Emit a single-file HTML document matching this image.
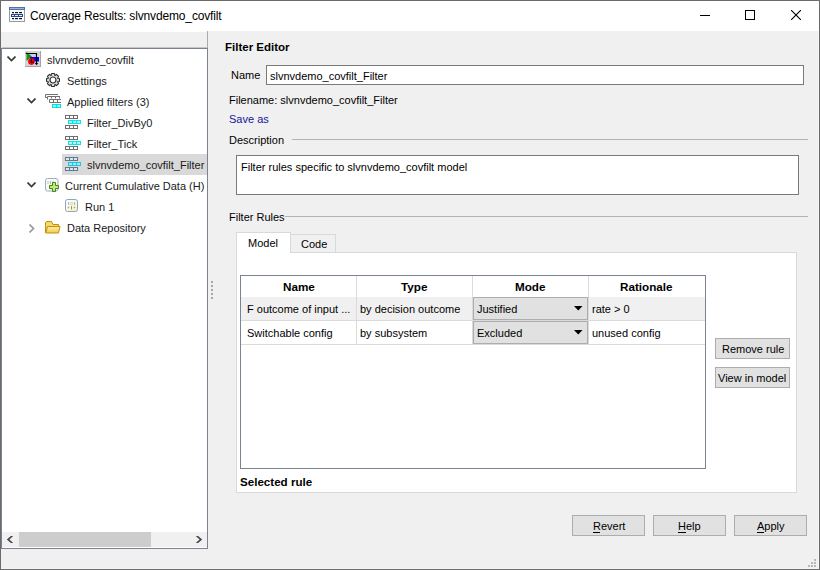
<!DOCTYPE html>
<html><head><meta charset="utf-8">
<style>
html,body{margin:0;padding:0;}
body{width:820px;height:570px;position:relative;overflow:hidden;background:#f0f0f0;font-family:"Liberation Sans",sans-serif;font-size:11px;color:#000;}
.a{position:absolute;}
.t{position:absolute;white-space:nowrap;line-height:13px;font-size:11px;}
.b{font-weight:bold;}
</style></head><body>
<!-- window frame -->
<div class="a" style="left:0;top:0;width:820px;height:31px;background:#fff;"></div>
<div class="a" style="left:0;top:31px;width:207px;height:1px;background:#fff;"></div>
<div class="a" style="left:0;top:0;width:820px;height:1px;background:#6b6b6b;"></div>
<div class="a" style="left:0;top:0;width:1px;height:570px;background:#6b6b6b;"></div>
<div class="a" style="left:818px;top:31px;width:1px;height:538px;background:#f5f5f5;"></div>
<div class="a" style="left:1px;top:568px;width:818px;height:1px;background:#f5f5f5;"></div>
<div class="a" style="left:819px;top:0;width:1px;height:570px;background:#6b6b6b;"></div>
<div class="a" style="left:0;top:569px;width:820px;height:1px;background:#6b6b6b;"></div>

<!-- title icon -->
<svg class="a" style="left:9px;top:7px" width="16" height="15" viewBox="0 0 16 15">
<rect x="0.5" y="0.5" width="15" height="14" fill="#fbfbfb" stroke="#9a9a9a"/>
<rect x="0" y="0" width="16" height="3" fill="#55739e"/>
<rect x="1" y="1" width="14" height="1" fill="#9ab6da"/>
<rect x="3" y="5" width="2" height="1.2" fill="#111"/><rect x="6" y="5" width="3" height="1.2" fill="#111"/><rect x="10" y="5" width="3" height="1.2" fill="#111"/>
<rect x="2" y="7" width="12" height="3" fill="#23468e"/>
<rect x="3" y="8" width="2" height="1" fill="#e8eef8"/><rect x="6" y="8" width="3" height="1" fill="#e8eef8"/><rect x="10" y="8" width="3" height="1" fill="#e8eef8"/>
<rect x="3" y="11" width="2" height="1.2" fill="#111"/><rect x="6" y="11" width="3" height="1.2" fill="#111"/><rect x="10" y="11" width="3" height="1.2" fill="#111"/>
</svg>
<div class="t" style="left:30px;top:9px;font-size:12px;letter-spacing:-0.15px;line-height:14px;">Coverage Results: slvnvdemo_covfilt</div>

<!-- window controls -->
<div class="a" style="left:700px;top:15px;width:10px;height:1px;background:#000;"></div>
<div class="a" style="left:745px;top:10px;width:8px;height:8px;border:1px solid #000;"></div>
<svg class="a" style="left:791px;top:10px" width="10" height="10" viewBox="0 0 10 10"><path d="M0 0L10 10M10 0L0 10" stroke="#000" stroke-width="1.1"/></svg>

<!-- left panel -->
<div class="a" style="left:2px;top:32px;width:205px;height:16px;background:#f0f0f0;"></div>
<div class="a" style="left:1px;top:48px;width:207px;height:501px;background:#fff;border:1px solid #7b8390;box-sizing:border-box;"></div>
<div class="a" style="left:2px;top:47px;width:205px;height:1px;background:#c4c6ca;"></div>
<div class="a" style="left:207px;top:31px;width:1px;height:17px;background:#a9abae;"></div>

<!-- scrollbar -->
<div class="a" style="left:2px;top:532px;width:205px;height:15px;background:#f0f0f0;"></div>
<div class="a" style="left:19px;top:532px;width:132px;height:15px;background:#cdcdcd;"></div>

<!-- splitter dots -->
<div class="a" style="left:211px;top:281px;width:2px;height:2px;background:#a8a8a8;"></div>
<div class="a" style="left:211px;top:285px;width:2px;height:2px;background:#a8a8a8;"></div>
<div class="a" style="left:211px;top:289px;width:2px;height:2px;background:#a8a8a8;"></div>
<div class="a" style="left:211px;top:293px;width:2px;height:2px;background:#a8a8a8;"></div>
<div class="a" style="left:211px;top:297px;width:2px;height:2px;background:#a8a8a8;"></div>

<!-- TREE -->

<!-- row1 -->
<svg class="a" style="left:7px;top:56px" width="9" height="6" viewBox="0 0 9 6"><path d="M0.5 0.5L4.5 4.5L8.5 0.5" fill="none" stroke="#3a3a3a" stroke-width="1.7"/></svg>
<svg class="a" style="left:25px;top:51px" width="16" height="16" viewBox="0 0 16 16">
<rect x="0" y="0" width="16" height="16" fill="#a4a4a4"/><rect x="0" y="0" width="15" height="15" fill="#d4d4d4"/>
<path d="M1.5 1V10L7 5.5Z" fill="#169016"/>
<rect x="5" y="6" width="9" height="4.5" fill="#0000ff"/>
<circle cx="6.4" cy="10.6" r="3.3" fill="#ff0000"/>
<path d="M6.3 8.3V11.2H8.8" fill="none" stroke="#000" stroke-width="1.1"/>
<path d="M0.8 2.5H11.5V12.5" fill="none" stroke="#000" stroke-width="1.2"/>
<path d="M9.8 12H13.2L11.5 14.3Z" fill="#000"/>
</svg>
<div class="t" style="left:47px;top:54px;color:#1a1a1a">slvnvdemo_covfilt</div>
<!-- row2 settings -->
<svg class="a" style="left:46px;top:73px" width="14" height="14" viewBox="0 0 14 14">
<g transform="translate(7 7)">
<path d="M-1.76 -4.68L-1.44 -6.44L1.44 -6.44L1.76 -4.68L2.06 -4.55L3.54 -5.57L5.57 -3.54L4.55 -2.06L4.68 -1.76L6.44 -1.44L6.44 1.44L4.68 1.76L4.55 2.06L5.57 3.54L3.54 5.57L2.06 4.55L1.76 4.68L1.44 6.44L-1.44 6.44L-1.76 4.68L-2.06 4.55L-3.54 5.57L-5.57 3.54L-4.55 2.06L-4.68 1.76L-6.44 1.44L-6.44 -1.44L-4.68 -1.76L-4.55 -2.06L-5.57 -3.54L-3.54 -5.57L-2.06 -4.55Z" fill="#dcdcdc" stroke="#2e2e2e" stroke-width="1.1" stroke-linejoin="round"/>
<circle cx="0" cy="0" r="3.0" fill="#fff" stroke="#2e2e2e" stroke-width="1.2"/>
</g></svg>
<div class="t" style="left:67px;top:75px;color:#1a1a1a">Settings</div>
<!-- row3 applied filters -->
<svg class="a" style="left:27px;top:98px" width="9" height="6" viewBox="0 0 9 6"><path d="M0.5 0.5L4.5 4.5L8.5 0.5" fill="none" stroke="#3a3a3a" stroke-width="1.7"/></svg>
<svg class="a" style="left:45px;top:94px" width="16" height="15" viewBox="0 0 16 15">
<g fill="none" stroke="#707070" stroke-width="1">
<path d="M0.5 3.5V0.5H13"/><path d="M0.5 3.5H2.5"/>
<path d="M2.5 5.5V2.5H15"/><path d="M6.5 3V4.5M10.5 3V4.5M14.5 3V4.5"/>
<path d="M4.5 8.5V5.5H16"/><path d="M4.5 8.5H16"/><path d="M8.5 6V8M12.5 6V8"/>
</g>
<rect x="7" y="10" width="9" height="4" fill="#00e3e6"/>
<rect x="8" y="11" width="3" height="2" fill="#9ff3f3"/><rect x="12" y="11" width="3" height="2" fill="#9ff3f3"/>
</svg>
<div class="t" style="left:67px;top:96px;color:#1a1a1a">Applied filters (3)</div>
<div class="a" style="left:62px;top:154px;width:145px;height:21px;background:#d9d9d9;"></div>
<svg class="a" style="left:65px;top:115px" width="16" height="14" viewBox="0 0 16 14"><rect x="0" y="0" width="13" height="4" fill="#6e6e6e"/><rect x="1" y="1" width="3" height="2" fill="#ffffff"/><rect x="5" y="1" width="3" height="2" fill="#ffffff"/><rect x="9" y="1" width="3" height="2" fill="#ffffff"/><rect x="0" y="10" width="13" height="4" fill="#6e6e6e"/><rect x="1" y="11" width="3" height="2" fill="#ffffff"/><rect x="5" y="11" width="3" height="2" fill="#ffffff"/><rect x="9" y="11" width="3" height="2" fill="#ffffff"/><rect x="3" y="5" width="13" height="4" fill="#00e8ea"/><rect x="4" y="6" width="3" height="2" fill="#b0f6f6"/><rect x="8" y="6" width="3" height="2" fill="#b0f6f6"/><rect x="12" y="6" width="3" height="2" fill="#b0f6f6"/></svg>
<div class="t" style="left:87px;top:117px;color:#1a1a1a">Filter_DivBy0</div>
<svg class="a" style="left:65px;top:136px" width="16" height="14" viewBox="0 0 16 14"><rect x="0" y="0" width="13" height="4" fill="#6e6e6e"/><rect x="1" y="1" width="3" height="2" fill="#ffffff"/><rect x="5" y="1" width="3" height="2" fill="#ffffff"/><rect x="9" y="1" width="3" height="2" fill="#ffffff"/><rect x="0" y="10" width="13" height="4" fill="#6e6e6e"/><rect x="1" y="11" width="3" height="2" fill="#ffffff"/><rect x="5" y="11" width="3" height="2" fill="#ffffff"/><rect x="9" y="11" width="3" height="2" fill="#ffffff"/><rect x="3" y="5" width="13" height="4" fill="#00e8ea"/><rect x="4" y="6" width="3" height="2" fill="#b0f6f6"/><rect x="8" y="6" width="3" height="2" fill="#b0f6f6"/><rect x="12" y="6" width="3" height="2" fill="#b0f6f6"/></svg>
<div class="t" style="left:87px;top:138px;color:#1a1a1a">Filter_Tick</div>
<svg class="a" style="left:65px;top:157px" width="16" height="14" viewBox="0 0 16 14"><rect x="0" y="0" width="13" height="4" fill="#5c7a96"/><rect x="1" y="1" width="3" height="2" fill="#dce6ee"/><rect x="5" y="1" width="3" height="2" fill="#dce6ee"/><rect x="9" y="1" width="3" height="2" fill="#dce6ee"/><rect x="0" y="10" width="13" height="4" fill="#5c7a96"/><rect x="1" y="11" width="3" height="2" fill="#dce6ee"/><rect x="5" y="11" width="3" height="2" fill="#dce6ee"/><rect x="9" y="11" width="3" height="2" fill="#dce6ee"/><rect x="3" y="5" width="13" height="4" fill="#1fc6e0"/><rect x="4" y="6" width="3" height="2" fill="#a6e6f0"/><rect x="8" y="6" width="3" height="2" fill="#a6e6f0"/><rect x="12" y="6" width="3" height="2" fill="#a6e6f0"/></svg>
<div class="t" style="left:87px;top:159px;color:#1a1a1a">slvnvdemo_covfilt_Filter</div>

<!-- row7 current -->
<svg class="a" style="left:27px;top:182px" width="9" height="6" viewBox="0 0 9 6"><path d="M0.5 0.5L4.5 4.5L8.5 0.5" fill="none" stroke="#3a3a3a" stroke-width="1.7"/></svg>
<svg class="a" style="left:45px;top:178px" width="15" height="14" viewBox="0 0 15 14">
<rect x="0.5" y="0.5" width="12.5" height="12.5" rx="2" fill="#fdfbe4" stroke="#8fb0d8"/>
<path d="M3 3V6M5.5 3V6M8 3V5" stroke="#a8c0dc" stroke-width="1"/>
<path d="M7.5 4.5H10.5V7.5H13.5V10.5H10.5V13.5H7.5V10.5H4.5V7.5H7.5Z" fill="#b6f07a" stroke="#507c22" stroke-width="1"/>
</svg>
<div class="t" style="left:65px;top:180px;color:#1a1a1a">Current Cumulative Data (H)</div>
<!-- row8 run -->
<svg class="a" style="left:65px;top:199px" width="13" height="13" viewBox="0 0 13 13">
<defs><linearGradient id="rg" x1="0" y1="0" x2="1" y2="1"><stop offset="0" stop-color="#ffffff"/><stop offset="1" stop-color="#f8f0b0"/></linearGradient></defs>
<rect x="0.5" y="0.5" width="12" height="12" rx="2" fill="url(#rg)" stroke="#86a6cf"/>
<path d="M3.5 3V6M9.5 3V6" stroke="#9cc0dc" stroke-width="1"/>
<path d="M5 4.5L6.5 3L8 4.5L6.5 6Z" fill="none" stroke="#a8c4e0" stroke-width="0.8"/>
<path d="M6.5 7V10.5" stroke="#909090" stroke-width="1"/>
<path d="M2.5 8.5L3.5 7.5L4.5 8.5L3.5 9.5Z M8.5 8.5L9.5 7.5L10.5 8.5L9.5 9.5Z" fill="#a0a0a0"/>
</svg>
<div class="t" style="left:85px;top:201px;color:#1a1a1a">Run 1</div>
<!-- row9 data repo -->
<svg class="a" style="left:29px;top:224px" width="6" height="9" viewBox="0 0 6 9"><path d="M0.5 0.5L4.5 4.5L0.5 8.5" fill="none" stroke="#9a9a9a" stroke-width="1.7"/></svg>
<svg class="a" style="left:45px;top:221px" width="16" height="13" viewBox="0 0 16 13">
<defs><linearGradient id="fg" x1="0" y1="0" x2="0" y2="1"><stop offset="0" stop-color="#fff2a8"/><stop offset="1" stop-color="#f2c84a"/></linearGradient></defs>
<path d="M0.5 1.5V11.5H13.5V3.5H8L6.5 0.5H2Z" fill="#f6d870" stroke="#c0900c" stroke-width="1"/>
<path d="M2.5 5.5H15L13.5 12H0.8Z" fill="url(#fg)" stroke="#c0900c" stroke-width="1"/>
</svg>
<div class="t" style="left:67px;top:222px;color:#1a1a1a">Data Repository</div>
<!-- scrollbar arrows -->
<svg class="a" style="left:6px;top:535px" width="8" height="9" viewBox="0 0 8 9"><path d="M7.2 1H4.9L0.8 4.5L4.9 8H7.2L3.4 4.5Z" fill="#454545"/></svg>
<svg class="a" style="left:195px;top:535px" width="8" height="9" viewBox="0 0 8 9"><path d="M0.8 1H3.1L7.2 4.5L3.1 8H0.8L4.6 4.5Z" fill="#454545"/></svg>


<!-- RIGHT PANEL -->

<div class="t b" style="left:225px;top:41px;font-size:11.5px">Filter Editor</div>
<div class="t" style="left:231px;top:69px">Name</div>
<div class="a" style="left:266px;top:65px;width:538px;height:20px;box-sizing:border-box;background:#fff;border:1px solid #7a7a7a;"></div>
<div class="t" style="left:270px;top:70px">slvnvdemo_covfilt_Filter</div>
<div class="t" style="left:229px;top:94px">Filename: slvnvdemo_covfilt_Filter</div>
<div class="t" style="left:229px;top:113px;color:#16169a">Save as</div>
<div class="t" style="left:229px;top:134px">Description</div>
<div class="a" style="left:292px;top:139px;width:516px;height:1px;background:#b4b4b4;"></div>
<div class="a" style="left:236px;top:155px;width:563px;height:40px;box-sizing:border-box;background:#fff;border:1px solid #7a7a7a;"></div>
<div class="t" style="left:241px;top:161px">Filter rules specific to slvnvdemo_covfilt model</div>
<div class="t" style="left:229px;top:211px">Filter Rules</div>
<div class="a" style="left:285px;top:216px;width:523px;height:1px;background:#b4b4b4;"></div>
<!-- tab panel -->
<div class="a" style="left:236px;top:252px;width:561px;height:241px;box-sizing:border-box;background:#fff;border:1px solid #d9d9d9;"></div>
<div class="a" style="left:290px;top:234px;width:46px;height:18px;box-sizing:border-box;background:#f0f0f0;border:1px solid #d9d9d9;border-bottom:none;"></div>
<div class="a" style="left:236px;top:232px;width:55px;height:21px;box-sizing:border-box;background:#fff;border:1px solid #d9d9d9;border-bottom:none;"></div>
<div class="t" style="left:248px;top:237px">Model</div>
<div class="t" style="left:301px;top:238px">Code</div>
<!-- table -->
<div class="a" style="left:240px;top:275px;width:466px;height:194px;box-sizing:border-box;background:#fff;border:1px solid #7b8390;"></div>
<div class="a" style="left:241px;top:297px;width:464px;height:23px;background:#f0f0f0;"></div>
<div class="a" style="left:241px;top:320px;width:464px;height:1px;background:#dadada;"></div>
<div class="a" style="left:241px;top:344px;width:464px;height:1px;background:#dadada;"></div>
<div class="a" style="left:356px;top:276px;width:1px;height:68px;background:#dadada;"></div>
<div class="a" style="left:472px;top:276px;width:1px;height:68px;background:#dadada;"></div>
<div class="a" style="left:588px;top:276px;width:1px;height:68px;background:#dadada;"></div>
<div class="t b" style="left:283px;top:280px;font-size:11.7px">Name</div>
<div class="t b" style="left:401px;top:280px;font-size:11.7px">Type</div>
<div class="t b" style="left:515px;top:280px;font-size:11.7px">Mode</div>
<div class="t b" style="left:620px;top:280px;font-size:11.7px">Rationale</div>
<div class="t" style="left:247px;top:303px">F outcome of input ...</div>
<div class="t" style="left:360px;top:303px">by decision outcome</div>
<div class="a" style="left:473px;top:297px;width:115px;height:23px;box-sizing:border-box;background:#e1e1e1;border:1px solid #adadad;"></div>
<div class="t" style="left:477px;top:303px">Justified</div>
<svg class="a" style="left:574px;top:306px" width="9" height="5" viewBox="0 0 9 5"><path d="M0 0H8.5L4.25 4.5Z" fill="#000"/></svg>
<div class="t" style="left:592px;top:303px">rate &gt; 0</div>
<div class="t" style="left:247px;top:327px">Switchable config</div>
<div class="t" style="left:360px;top:327px">by subsystem</div>
<div class="a" style="left:473px;top:321px;width:115px;height:23px;box-sizing:border-box;background:#e1e1e1;border:1px solid #adadad;"></div>
<div class="t" style="left:477px;top:327px">Excluded</div>
<svg class="a" style="left:574px;top:330px" width="9" height="5" viewBox="0 0 9 5"><path d="M0 0H8.5L4.25 4.5Z" fill="#000"/></svg>
<div class="t" style="left:592px;top:327px">unused config</div>
<!-- side buttons -->
<div class="a" style="left:715px;top:338px;width:75px;height:21px;box-sizing:border-box;background:#e1e1e1;border:1px solid #adadad;"></div>
<div class="t" style="left:722px;top:343px">Remove rule</div>
<div class="a" style="left:715px;top:367px;width:75px;height:21px;box-sizing:border-box;background:#e1e1e1;border:1px solid #adadad;"></div>
<div class="t" style="left:718px;top:372px">View in model</div>
<div class="t b" style="left:240px;top:475px;font-size:11.6px">Selected rule</div>
<!-- bottom buttons -->
<div class="a" style="left:572px;top:515px;width:73px;height:21px;box-sizing:border-box;background:#e1e1e1;border:1px solid #adadad;"></div>
<div class="t" style="left:593px;top:520px">Revert</div>
<div class="a" style="left:593px;top:532px;width:7px;height:1px;background:#000;"></div>
<div class="a" style="left:653px;top:515px;width:73px;height:21px;box-sizing:border-box;background:#e1e1e1;border:1px solid #adadad;"></div>
<div class="t" style="left:678px;top:520px">Help</div>
<div class="a" style="left:678px;top:532px;width:8px;height:1px;background:#000;"></div>
<div class="a" style="left:734px;top:515px;width:73px;height:21px;box-sizing:border-box;background:#e1e1e1;border:1px solid #adadad;"></div>
<div class="t" style="left:757px;top:520px">Apply</div>
<div class="a" style="left:757px;top:532px;width:7px;height:1px;background:#000;"></div>
<!-- grip -->
<div class="a" style="left:814px;top:559px;width:2px;height:2px;background:#b8b8b8;"></div>
<div class="a" style="left:811px;top:562px;width:2px;height:2px;background:#b8b8b8;"></div>
<div class="a" style="left:814px;top:562px;width:2px;height:2px;background:#b8b8b8;"></div>
<div class="a" style="left:808px;top:565px;width:2px;height:2px;background:#b8b8b8;"></div>
<div class="a" style="left:811px;top:565px;width:2px;height:2px;background:#b8b8b8;"></div>
<div class="a" style="left:814px;top:565px;width:2px;height:2px;background:#b8b8b8;"></div>


</body></html>
